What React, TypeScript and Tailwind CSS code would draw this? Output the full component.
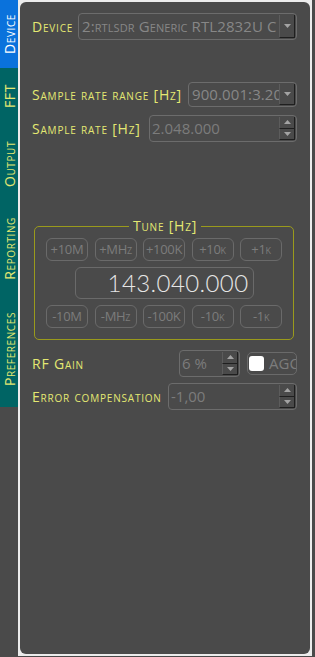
import React from "react";

const LABEL = "text-[#e4e872] [font-variant:small-caps] tracking-[0.8px] whitespace-nowrap";
const FONT = { fontFamily: "'Open Sans', Lato, sans-serif" };

const TABS = [
  { name: "Device", h: "h-[68px]", active: true },
  { name: "FFT", h: "h-[56px]" },
  { name: "Output", h: "h-[80px]" },
  { name: "Reporting", h: "h-[88px]" },
  { name: "Preferences", h: "h-[115px]" },
];

function Arrow({ up }: { up?: boolean }) {
  return (
    <svg width="7" height="4" viewBox="0 0 7 4">
      <path d={up ? "M0 4 L3.5 0 L7 4 Z" : "M0 0 L7 0 L3.5 4 Z"} fill="#a3a3a3" />
    </svg>
  );
}

function Combo({ text, w, h }: { text: string; w: string; h: string }) {
  return (
    <div className={`${w} ${h} flex items-stretch rounded-[4px] border border-[#6c6c6c] overflow-hidden`}>
      <div className="flex-1 overflow-hidden whitespace-nowrap pl-[3px] text-[15px] tracking-[0.1px] text-[#878787] flex items-center [font-variant:small-caps]">
        {text}
      </div>
      <div className="w-[16px] my-[1px] mr-[1px] flex items-center justify-center border-r border-b border-[#1f1f1f] border-l border-l-[#5c5c5c]">
        <Arrow />
      </div>
    </div>
  );
}

function Spin({ text, w, h }: { text: string; w: string; h: string }) {
  return (
    <div className={`${w} ${h} flex items-stretch rounded-[4px] border border-[#6c6c6c] overflow-hidden`}>
      <div className="flex-1 overflow-hidden whitespace-nowrap pl-[2px] text-[15px] text-[#7c7c7c] flex items-center">
        {text}
      </div>
      <div className="w-[16px] flex flex-col my-[1px] mr-[1px]">
        <div className="flex-1 flex items-center justify-center border-r border-b border-[#1f1f1f] border-l border-l-[#5c5c5c]">
          <Arrow up />
        </div>
        <div className="flex-1 flex items-center justify-center border-r border-b border-[#1f1f1f] border-l border-l-[#5c5c5c]">
          <Arrow />
        </div>
      </div>
    </div>
  );
}

function TuneBtn({ label }: { label: string }) {
  return (
    <div className="w-[42px] h-[23px] rounded-[6px] border border-[#6a6a6a] flex items-center justify-center text-[13px] tracking-[-0.3px] text-[#7c7c7c] [font-variant:small-caps]">
      {label}
    </div>
  );
}

export default function App() {
  return (
    <div className="w-[315px] h-[657px] bg-[#4a4a4a] flex overflow-hidden" style={FONT}>
      <div className="w-[18px] flex flex-col">
        {TABS.map((t) => (
          <div
            key={t.name}
            className={`${t.h} flex items-center justify-center ${t.active ? "bg-[#0a72dc] text-white" : "bg-[#006464] text-[#e4e872]"}`}
          >
            <span className="[writing-mode:vertical-rl] rotate-180 text-[14px] tracking-[0.6px] [font-variant:small-caps] whitespace-nowrap">
              {t.name}
            </span>
          </div>
        ))}
      </div>

      <div className="w-[294px] h-[656px] bg-[#ececec] p-[2px]">
        <div className="h-full rounded-[6px] bg-[#4a4a4a] pl-[12px] pr-[13px] text-[14px] flex flex-col">
          <div className="mt-[11px] flex items-center justify-between">
            <span className={LABEL}>Device</span>
            <Combo text="2:rtlsdr Generic RTL2832U C" w="w-[219px]" h="h-[27px]" />
          </div>

          <div className="mt-[42px] flex items-center justify-between">
            <span className={LABEL}>Sample rate range [Hz]</span>
            <Combo text="900.001:3.20" w="w-[109px]" h="h-[25px]" />
          </div>

          <div className="mt-[8px] flex items-center justify-between">
            <span className={LABEL}>Sample rate [Hz]</span>
            <Spin text="2.048.000" w="w-[148px]" h="h-[27px]" />
          </div>

          <div className="mt-[84px] ml-[2px] w-[260px] relative rounded-[5px] border border-[#9a9a1c] px-[11px] pt-[11px] pb-[11px] flex flex-col gap-[6px]">
            <span className={`${LABEL} absolute left-[94px] top-[-10px] bg-[#4a4a4a] px-[4px] leading-[18px]`}>
              Tune [Hz]
            </span>
            <div className="flex justify-between">
              {["+10M", "+MHz", "+100K", "+10k", "+1k"].map((b) => (
                <TuneBtn key={b} label={b} />
              ))}
            </div>
            <div className="mx-auto w-[179px] h-[32px] rounded-[6px] border border-[#6a6a6a] flex items-center justify-end pr-[4px]">
              <span
                className="text-[24px] text-[#e6e6e6] tracking-[0.4px] leading-none"
                style={{ fontFamily: "Lato, sans-serif", fontWeight: 300 }}
              >
                143.040.000
              </span>
            </div>
            <div className="flex justify-between">
              {["-10M", "-MHz", "-100K", "-10k", "-1k"].map((b) => (
                <TuneBtn key={b} label={b} />
              ))}
            </div>
          </div>

          <div className="mt-[10px] flex items-center">
            <span className={`${LABEL} flex-1`}>RF Gain</span>
            <Spin text="6 %" w="w-[61px]" h="h-[27px]" />
            <div className="ml-[7px] w-[50px] h-[23px] rounded-[5px] border border-[#6a6a6a] flex items-center pl-[1px] overflow-hidden">
              <div className="w-[15px] h-[15px] shrink-0 rounded-[3px] bg-white" />
              <span className="ml-[5px] text-[15px] text-[#7c7c7c] whitespace-nowrap">AGC</span>
            </div>
          </div>

          <div className="mt-[6px] flex items-center justify-between">
            <span className={LABEL}>Error compensation</span>
            <Spin text="-1,00" w="w-[129px]" h="h-[27px]" />
          </div>
        </div>
      </div>
    </div>
  );
}
